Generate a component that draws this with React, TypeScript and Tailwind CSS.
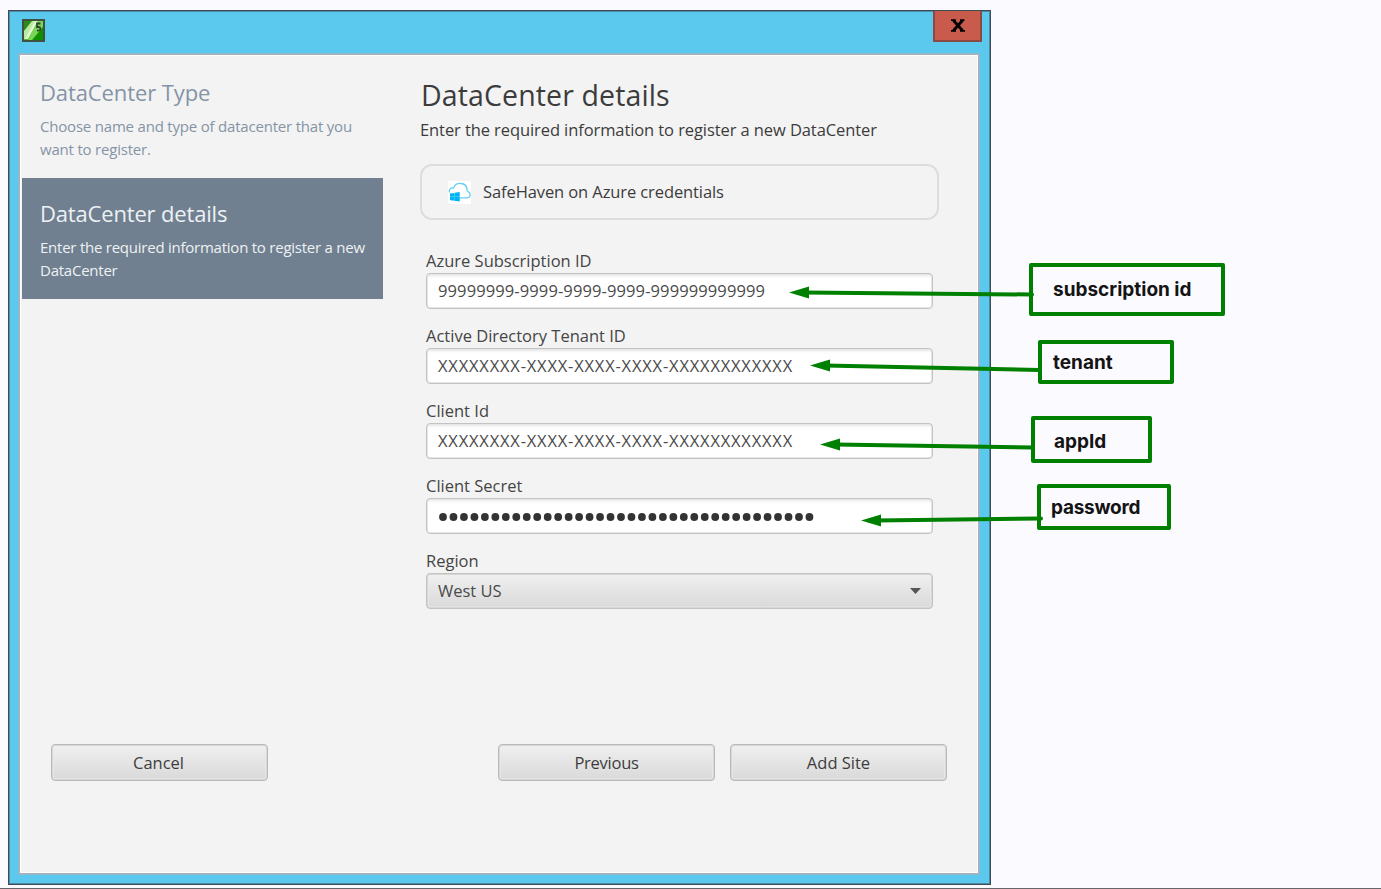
const inputBase =
  "flex h-[36px] w-[507px] items-center rounded-[4px] border border-[#c3c3c3] px-[11px] text-[16.5px] text-[#4a4a4a]";

const buttonBase =
  "flex h-[37px] w-[217px] items-center justify-center rounded-[4px] border border-[#bababa] bg-linear-to-b from-[#f0f0f0] to-[#d9d9d9] pt-[2px] text-[16.5px] leading-none text-[#3d3d3d] shadow-[inset_0_0_0_1px_#d6d6d6,inset_0_0_0_2px_#ededed88]";

const inputFill = "bg-white shadow-[inset_0_0_0_1px_#e6e6e6,inset_0_3px_3px_-1px_#e6e6e6]";

function LeafIcon() {
  return (
    <svg className="size-[23px]" viewBox="0 0 23 23">
      <defs>
        <linearGradient id="leaf" x1="0" y1="0" x2="1" y2="1">
          <stop offset="0" stopColor="#1c6b10" />
          <stop offset="0.5" stopColor="#55c030" />
          <stop offset="1" stopColor="#087a00" />
        </linearGradient>
      </defs>
      <rect x="1" y="1" width="21" height="21" fill="url(#leaf)" stroke="#3f5240" strokeWidth="2" />
      <path d="M2 2h8L2 12z" fill="#2c8a1c" />
      <path d="M10 2h4L4 20H2v-8z" fill="#b9eba0" />
      <path d="M13 2h3L6 20H3z" fill="#e2f9d2" />
      <path d="M16 2h5v8l-8 11H6z" fill="#7ad455" />
      <path d="M21 8v13H10z" fill="#109000" />
      <path d="M18.500 4.500h-3.500v3.500h2q1.500.2 1.500 2t-3.500 1.500" fill="none" stroke="#2c4a2f" strokeWidth="1.800" />
    </svg>
  );
}

function AzureIcon() {
  return (
    <svg className="size-[23px] bg-white" viewBox="0 0 23 23">
      <path
        d="M1.500 11.500C.7 9 2.600 6.700 5 7c.5-.1.800-.3 1-.8C7.300 3.500 10 2 13 2.500c3.500.2 5.700 2.500 6 6-.1 1 .2 1.700 1 2.200 3.300 1.700 2.700 5.800-.8 6.100H12"
        fill="none"
        stroke="#63cdf5"
        strokeWidth="1.300"
      />
      <path d="M2 12.600l4-.7v3.600H2zM6.500 11.800l5.200-.8v4.500H6.500zM2 16h4v3.600l-4-.6zM6.500 16h5.200v4.500l-5.200-.8z" fill="#00b4f1" />
      <path d="M2.500 13h9v6.500h-9z" fill="#00b4f1" opacity=".6" />
    </svg>
  );
}

function Field({ label, value, className }: { label: string; value: string; className: string }) {
  return (
    <label className="flex h-[75px] flex-col">
      <span className="h-[24px] text-[16.5px] leading-[24px] text-[#454545]">{label}</span>
      <span className={`${inputBase} ${inputFill}`}>
        <span className={className}>{value}</span>
      </span>
    </label>
  );
}

const arrows = [
  { x: 789, y: 292.5, tx: 1032, ty: 294.5 },
  { x: 810, y: 365.5, tx: 1039, ty: 370 },
  { x: 820, y: 444.5, tx: 1032, ty: 447.5 },
  { x: 861, y: 520.5, tx: 1041, ty: 518.5 },
];

function Arrows() {
  return (
    <svg className="pointer-events-none absolute inset-0" width="1381" height="889">
      {arrows.map((a) => (
        <g key={a.x} fill="#008000" stroke="#008000">
          <path d={`M${a.x + 15} ${a.y}L${a.tx} ${a.ty}`} strokeWidth="4" strokeLinecap="round" />
          <path d={`M${a.x} ${a.y}l20 -6v12z`} stroke="none" />
        </g>
      ))}
    </svg>
  );
}

const noteBase =
  "absolute flex items-center rounded-[2px] border-4 border-[#008000] font-['Inter',sans-serif] text-[19px] leading-none font-bold text-[#141414]";

export default function App() {
  return (
    <main className="relative flex h-[889px] w-[1381px] flex-col overflow-hidden border-b border-[#66666a] bg-[#fbfaff] pt-[10px] pl-[8px] font-['Open_Sans',sans-serif]">
      <section className="flex h-[875px] w-[983px] flex-col border border-[#3f4c56] bg-[#5bc8ee] px-[11px] pb-[10px] shadow-[inset_0_0_0_1px_#4c8ba3]">
        <header className="flex h-[43px] shrink-0 justify-between">
          <div className="pt-[8px] pl-[2px]">
            <LeafIcon />
          </div>
          <button className="-mr-[3px] flex h-[31px] w-[49px] items-center justify-center border-2 border-t-0 border-[#8c4a45] bg-[#c85b4b]">
            <svg width="14" height="13" viewBox="0 0 14 13" fill="none" stroke="#000">
              <path d="M2.500 1.500l9 10M11.500 1.500l-9 10" strokeWidth="2.800" />
              <path d="M0 1.200h5M9 1.200h4.500M0 11.800h5M9 11.800h5" strokeWidth="1.800" />
            </svg>
          </button>
        </header>

        <div className="-ml-px flex w-[960px] grow border border-[#a9b0b8] bg-[#f3f3f3] shadow-[inset_0_0_0_1px_#fff,0_0_0_1px_#8fb9cc]">
          <div className="flex w-[363px] flex-col pl-[2px]">
            <nav className="flex flex-col">
              <div className="h-[123px] pt-[22px] pl-[18px] text-[#8593a6]">
                <h2 className="text-[22px] leading-[30px] tracking-[-0.1px]">DataCenter Type</h2>
                <p className="mt-[8px] text-[15px] leading-[23px] tracking-[-0.2px]">
                  Choose name and type of datacenter that you
                  <br />
                  want to register.
                </p>
              </div>
              <div className="h-[121px] bg-[#708090] pt-[20px] pl-[18px] text-[#eef1f3]">
                <h2 className="text-[22px] leading-[30px] tracking-[-0.17px]">DataCenter details</h2>
                <p className="mt-[8px] text-[15px] leading-[23px] tracking-[-0.24px]">
                  Enter the required information to register a new
                  <br />
                  DataCenter
                </p>
              </div>
            </nav>
            <div className="mt-[445px] ml-[29px]">
              <button className={buttonBase}>
                <span className="mr-[2px]">Cancel</span>
              </button>
            </div>
          </div>

          <div className="flex flex-col pt-[19px] pl-[37px]">
            <h1 className="h-[43px] pl-px text-[28.5px] leading-[42px] tracking-[0.12px] text-[#3c3c3c]">DataCenter details</h1>
            <p className="h-[26px] text-[16.5px] leading-[26px] tracking-[-0.09px] text-[#3c3c3c]">
              Enter the required information to register a new DataCenter
            </p>
            <div className="mt-[21px] flex h-[56px] w-[519px] items-center rounded-[12px] border-2 border-[#dddddd] pl-[26px]">
              <AzureIcon />
              <span className="ml-[12px] text-[16.5px] leading-none tracking-[-0.1px] text-[#3c3c3c]">
                SafeHaven on Azure credentials
              </span>
            </div>
            <form className="mt-[29px] ml-[6px] flex flex-col">
              <Field label="Azure Subscription ID" value="99999999-9999-9999-9999-999999999999" className="tracking-[0.11px]" />
              <Field label="Active Directory Tenant ID" value="XXXXXXXX-XXXX-XXXX-XXXX-XXXXXXXXXXXX" className="tracking-[0.8px]" />
              <Field label="Client Id" value="XXXXXXXX-XXXX-XXXX-XXXX-XXXXXXXXXXXX" className="tracking-[0.8px]" />
              <label className="flex h-[75px] flex-col">
                <span className="h-[24px] text-[16.5px] leading-[24px] text-[#454545]">Client Secret</span>
                <span className={`${inputBase} ${inputFill}`}>
                  <svg width="380" height="12" fill="#333">
                    {Array.from({ length: 36 }, (_, i) => (
                      <circle key={i} cx={5 + i * 10.47} cy="7" r="3.9" />
                    ))}
                  </svg>
                </span>
              </label>
              <label className="flex flex-col">
                <span className="h-[24px] text-[16.5px] leading-[24px] text-[#454545]">Region</span>
                <span
                  className={`${inputBase} justify-between border-[#b8b8b8] bg-linear-to-b from-[#f0f0f0] to-[#d9d9d9] shadow-[inset_0_0_0_1px_#d6d6d6,inset_0_0_0_2px_#ededed88]`}
                >
                  West US
                  <svg width="11" height="6" fill="#555">
                    <path d="M0 0h11L5.500 6z" />
                  </svg>
                </span>
              </label>
            </form>
            <div className="mt-[135px] ml-[78px] flex gap-[15px]">
              <button className={buttonBase}>
                <span className="tracking-[-0.25px]">Previous</span>
              </button>
              <button className={buttonBase}>Add Site</button>
            </div>
          </div>
        </div>
      </section>

      <div className={`${noteBase} top-[263px] left-[1029px] h-[53px] w-[196px] pl-[20px]`}>subscription id</div>
      <div className={`${noteBase} top-[340px] left-[1038px] h-[44px] w-[136px] pl-[11px]`}>tenant</div>
      <div className={`${noteBase} top-[416px] left-[1031px] h-[47px] w-[121px] pt-[3px] pl-[19px]`}>appId</div>
      <div className={`${noteBase} top-[484px] left-[1037px] h-[46px] w-[134px] pl-[10px] tracking-[-0.25px]`}>password</div>
      <Arrows />
    </main>
  );
}
